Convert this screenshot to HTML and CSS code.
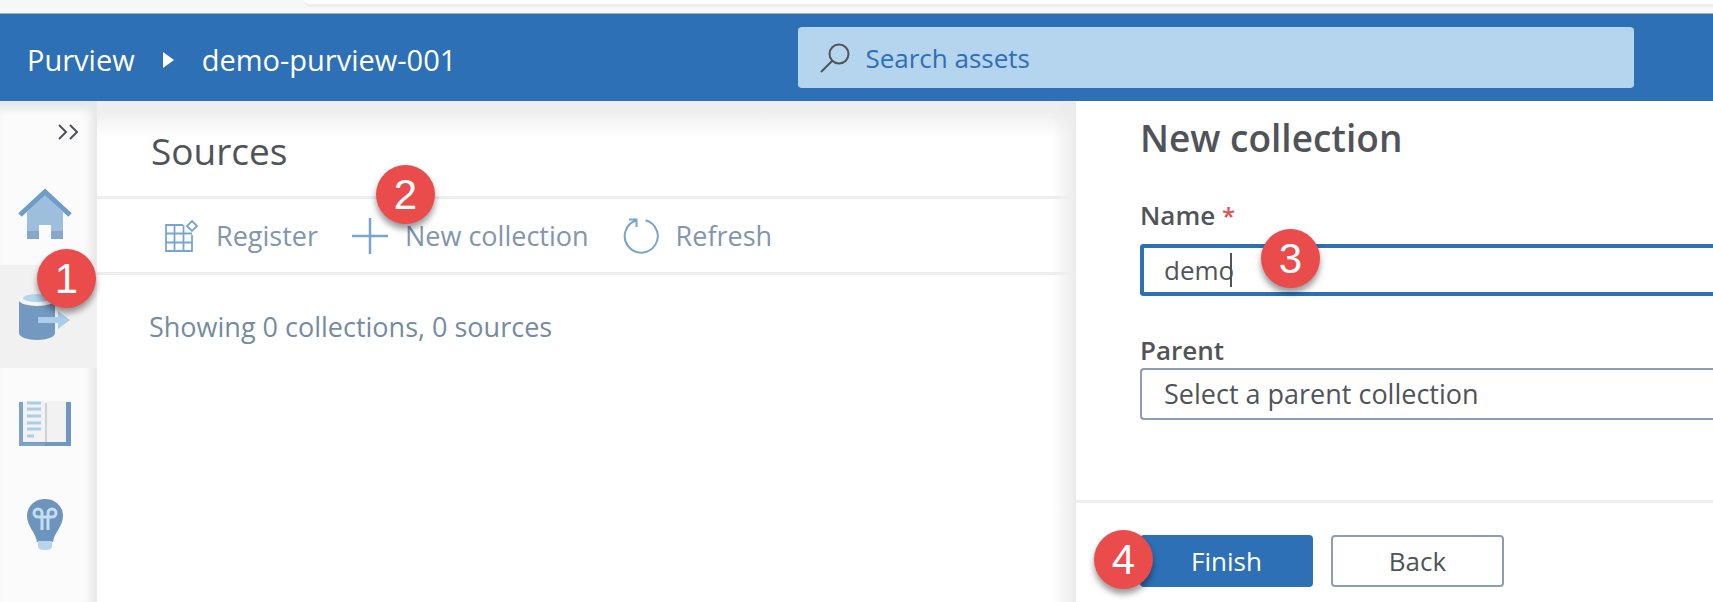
FILE: index.html
```html
<!DOCTYPE html>
<html lang="en">
<head>
<meta charset="utf-8">
<title>Purview - New collection</title>
<link rel="stylesheet" href="styles.css">
</head>
<body>
<div class="app">
  <div class="browser-strip"><div class="address-edge"></div></div>
  <header class="topbar">
    <nav class="breadcrumb" aria-label="Breadcrumb">
      <a class="crumb" href="#">Purview</a>
      <svg class="crumb-arrow" viewBox="0 0 11 18" aria-hidden="true"><path d="M0 1 11 9 0 17z" fill="#fff"/></svg>
      <a class="crumb" href="#">demo-purview-001</a>
    </nav>
    <label class="search">
      <svg class="search-icon" viewBox="0 0 30 30" aria-hidden="true"><g fill="none" stroke="#505458" stroke-width="2"><circle cx="19" cy="11" r="9.5"/><path d="M12.500 17.500 1 29"/></g></svg>
      <input class="search-input" type="search" placeholder="Search assets" aria-label="Search assets">
    </label>
  </header>
  <div class="workspace">
    <nav class="rail" aria-label="Main">
      <button class="expand" type="button" aria-label="Expand menu">
        <svg class="expand-icon" viewBox="0 0 20 16" aria-hidden="true"><path d="M1 1 8 8 1 15M12 1 19 8 12 15" fill="none" stroke="#505458" stroke-width="2"/></svg>
      </button>
      <a class="rail-item" href="#" aria-label="Home">
        <svg class="rail-icon" viewBox="0 0 54 54" aria-hidden="true"><path d="M9 25 27 8 45 25V52H33V38H21V52H9z" fill="#9dbfdd"/><path d="M9 44H21V52H9zM33 44H45V52H33z" fill="#86a8c8"/><path d="M2 28 27 5 52 28" fill="none" stroke="#6f9cc6" stroke-width="5"/></svg>
      </a>
      <a class="rail-item active" href="#" aria-label="Sources">
        <svg class="rail-icon" viewBox="0 0 54 54" aria-hidden="true"><path d="M1 11V43C1 47 9 50 19 50S37 47 37 43V11z" fill="#7399c0"/><ellipse cx="19" cy="10" rx="18" ry="6" fill="#f4f6f8"/><ellipse cx="19" cy="8" rx="14" ry="4" fill="#b5d4ee"/><path d="M20 27H40V21L52 30 40 39V33H20z" fill="#a9cdea"/></svg>
        <span class="badge badge-sources">1</span>
      </a>
      <a class="rail-item" href="#" aria-label="Glossary">
        <svg class="rail-icon" viewBox="0 0 54 54" aria-hidden="true"><path d="M1 9H6V48H48V9H53V53H1z" fill="#6f97c0"/><path d="M5 8H26L28 10 30 8H48V49H5z" fill="#f2f2f2"/><path d="M9 10H23M9 16H23M9 23H23M9 30H23M9 36H23M9 43H16" stroke="#a9cdea" stroke-width="3"/><path d="M28 10V49" stroke="#d2d2d2" stroke-width="2"/><path d="M1 9V53H27V50H5V9z" fill="#7ea3c6"/></svg>
      </a>
      <a class="rail-item" href="#" aria-label="Insights">
        <svg class="rail-icon" viewBox="0 0 54 54" aria-hidden="true"><path d="M27 3C16 3 9 11 9 20 9 30 18 37 19 46H35C36 37 45 30 45 20 45 11 38 3 27 3z" fill="#6c94bd"/><path d="M20 45H34V50Q34 54 27 54T20 50z" fill="#b5d4ee"/><path d="M24 34V21M30 34V21M24 21H20A4 4 0 1 1 24 17V21H30V17A4 4 0 1 1 34 21H30" fill="none" stroke="#c4ddf2" stroke-width="3"/></svg>
      </a>
    </nav>
    <main class="sources">
      <div class="sources-head"><h1 class="sources-title">Sources</h1></div>
      <div class="toolbar">
        <button class="tool" type="button">
          <svg class="tool-icon" viewBox="0 0 36 36" aria-hidden="true"><path d="M20 7H3V33H29V17M3 15.500H29M3 24.500H29M11.500 7V33M20.500 7V33M29 3 34 8 29 13 24 8z" fill="none" stroke="#78a5cf" stroke-width="1.800"/></svg>
          <span>Register</span>
        </button>
        <button class="tool" type="button">
          <svg class="tool-icon" viewBox="0 0 36 36" aria-hidden="true"><path d="M18 0V36M0 18H36" stroke="#78a5cf" stroke-width="2.500"/></svg>
          <span>New collection</span>
          <span class="badge badge-new">2</span>
        </button>
        <button class="tool" type="button">
          <svg class="tool-icon" viewBox="0 0 36 36" aria-hidden="true"><path d="M22.500 2.200A16.500 16.500 0 1 1 13 2.500M6 1.500H13.500V9" fill="none" stroke="#78a5cf" stroke-width="2"/></svg>
          <span>Refresh</span>
        </button>
      </div>
      <p class="summary">Showing 0 collections, 0 sources</p>
    </main>
    <form class="panel">
      <div class="panel-body">
        <h2 class="panel-title">New collection</h2>
        <label class="field-label" for="name">Name <span class="required">*</span></label>
        <div class="field">
          <input class="control name-input" id="name" type="text" value="demo" required>
          <span class="caret"></span>
          <span class="badge badge-name">3</span>
        </div>
        <label class="field-label parent-label" for="parent">Parent</label>
        <select class="control parent-select" id="parent"><option>Select a parent collection</option></select>
      </div>
      <div class="panel-actions">
        <button class="action primary" type="button">Finish<span class="badge badge-finish">4</span></button>
        <button class="action" type="button">Back</button>
      </div>
    </form>
  </div>
</div>
</body>
</html>
```
FILE: styles.css
```css
* { box-sizing: border-box; }
body { margin: 0; background: #fff; color: #505458; font: 26px/36px "Open Sans", "Noto Sans", sans-serif; }
a { color: inherit; text-decoration: none; }
h1, h2, p { margin: 0; }
button, input, select { font: inherit; color: inherit; }

.app { display: flex; flex-direction: column; min-height: 100vh; }
.browser-strip { height: 14px; padding-left: 304px; background: #f7f7f7; border-bottom: 1px solid #9fb0c0; }
.address-edge { height: 7px; background: #fff; border-bottom: 3px solid #eee; border-bottom-left-radius: 8px; }

.topbar { display: flex; align-items: center; justify-content: space-between; height: 87px; padding: 0 79px 0 27px; background: #2d70b5; color: #fff; }
.breadcrumb { display: flex; align-items: center; gap: 28px; padding-top: 4px; font-size: 29px; }
.crumb-arrow { width: 11px; height: 18px; }
.search { display: flex; align-items: center; gap: 15px; width: 52%; height: 61px; padding: 0 22px; background: #b5d4ee; border-radius: 4px; }
.search-icon { width: 30px; height: 30px; flex: none; }
.search-input { flex: 1; min-width: 0; padding: 0; border: 0; outline: 0; background: none; }
.search-input::placeholder { color: #2d70b5; opacity: 1; }

.workspace { display: grid; grid-template-columns: 97px minmax(0, 1fr) 637px; flex: 1; }

.rail { display: flex; flex-direction: column; background: #fbfbfb; box-shadow: inset -6px 8px 8px #e6e6e6; }
.expand { display: flex; justify-content: flex-end; height: 61px; padding: 23px 19px 0 0; border: 0; background: none; }
.expand-icon { width: 20px; height: 16px; }
.rail-item { position: relative; height: 103px; padding: 25px 18px; }
.rail-item.active { background: #f1f1f1; }
.rail-icon { display: block; width: 54px; height: 54px; }

.sources { background: linear-gradient(to left, #ebebeb, #fff0 24px), linear-gradient(#eee 10px, #fff 36px); }
.sources-head { padding: 26px 54px 21px; border-bottom: 3px solid #eee; }
.sources-title { font-size: 37px; line-height: 48px; font-weight: 400; }
.toolbar { display: flex; gap: 34px; height: 76px; padding: 0 66px; border-bottom: 3px solid #eee; color: #8196ac; font-size: 27px; }
.tool { position: relative; display: flex; align-items: center; gap: 17px; padding: 0; border: 0; background: none; white-space: nowrap; }
.tool-icon { width: 36px; height: 36px; flex: none; }
.summary { padding: 34px 52px; color: #758ba1; font-size: 27px; }

.panel { display: flex; flex-direction: column; background: #fff; }
.panel-body { display: flex; flex-direction: column; flex: 1; padding: 13px 0 0 64px; }
.panel-title { padding-bottom: 31px; font-size: 37px; line-height: 48px; font-weight: 600; }
.field-label { padding-bottom: 6px; font-weight: 600; line-height: 44px; }
.parent-label { padding: 36px 0 0; line-height: 36px; }
.required { color: #e05050; font-size: 24px; }
.field { position: relative; }
.control { display: block; width: 100%; height: 52px; padding: 0 22px; border: 2px solid #8a9fb5; border-right: 0; border-radius: 4px 0 0 4px; background: #fff; outline: 0; }
.name-input { border: 4px solid #2d70b5; border-right: 0; padding: 0 20px; }
.parent-select { appearance: none; font-size: 27px; }
.caret { position: absolute; left: 90px; top: 9px; width: 2px; height: 34px; background: #505458; }
.panel-actions { display: flex; gap: 18px; padding: 32px 64px 15px; border-top: 3px solid #eee; }
.action { position: relative; width: 173px; height: 52px; padding: 0; border: 2px solid #8a9fb5; border-radius: 4px; background: #fff; }
.action.primary { border-color: #2d70b5; background: #2d70b5; color: #fff; }

.badge { position: absolute; z-index: 1; width: 59px; height: 59px; border-radius: 50%; background: #ea4c4c; box-shadow: 0 5px 6px #0006; color: #fff; font: 42px/59px "Liberation Sans", sans-serif; text-align: center; }
.badge-sources { left: 37px; top: -16px; }
.badge-new { left: 24px; top: -34px; }
.badge-name { left: 121px; top: -15px; }
.badge-finish { left: -48px; top: -7px; }
```
